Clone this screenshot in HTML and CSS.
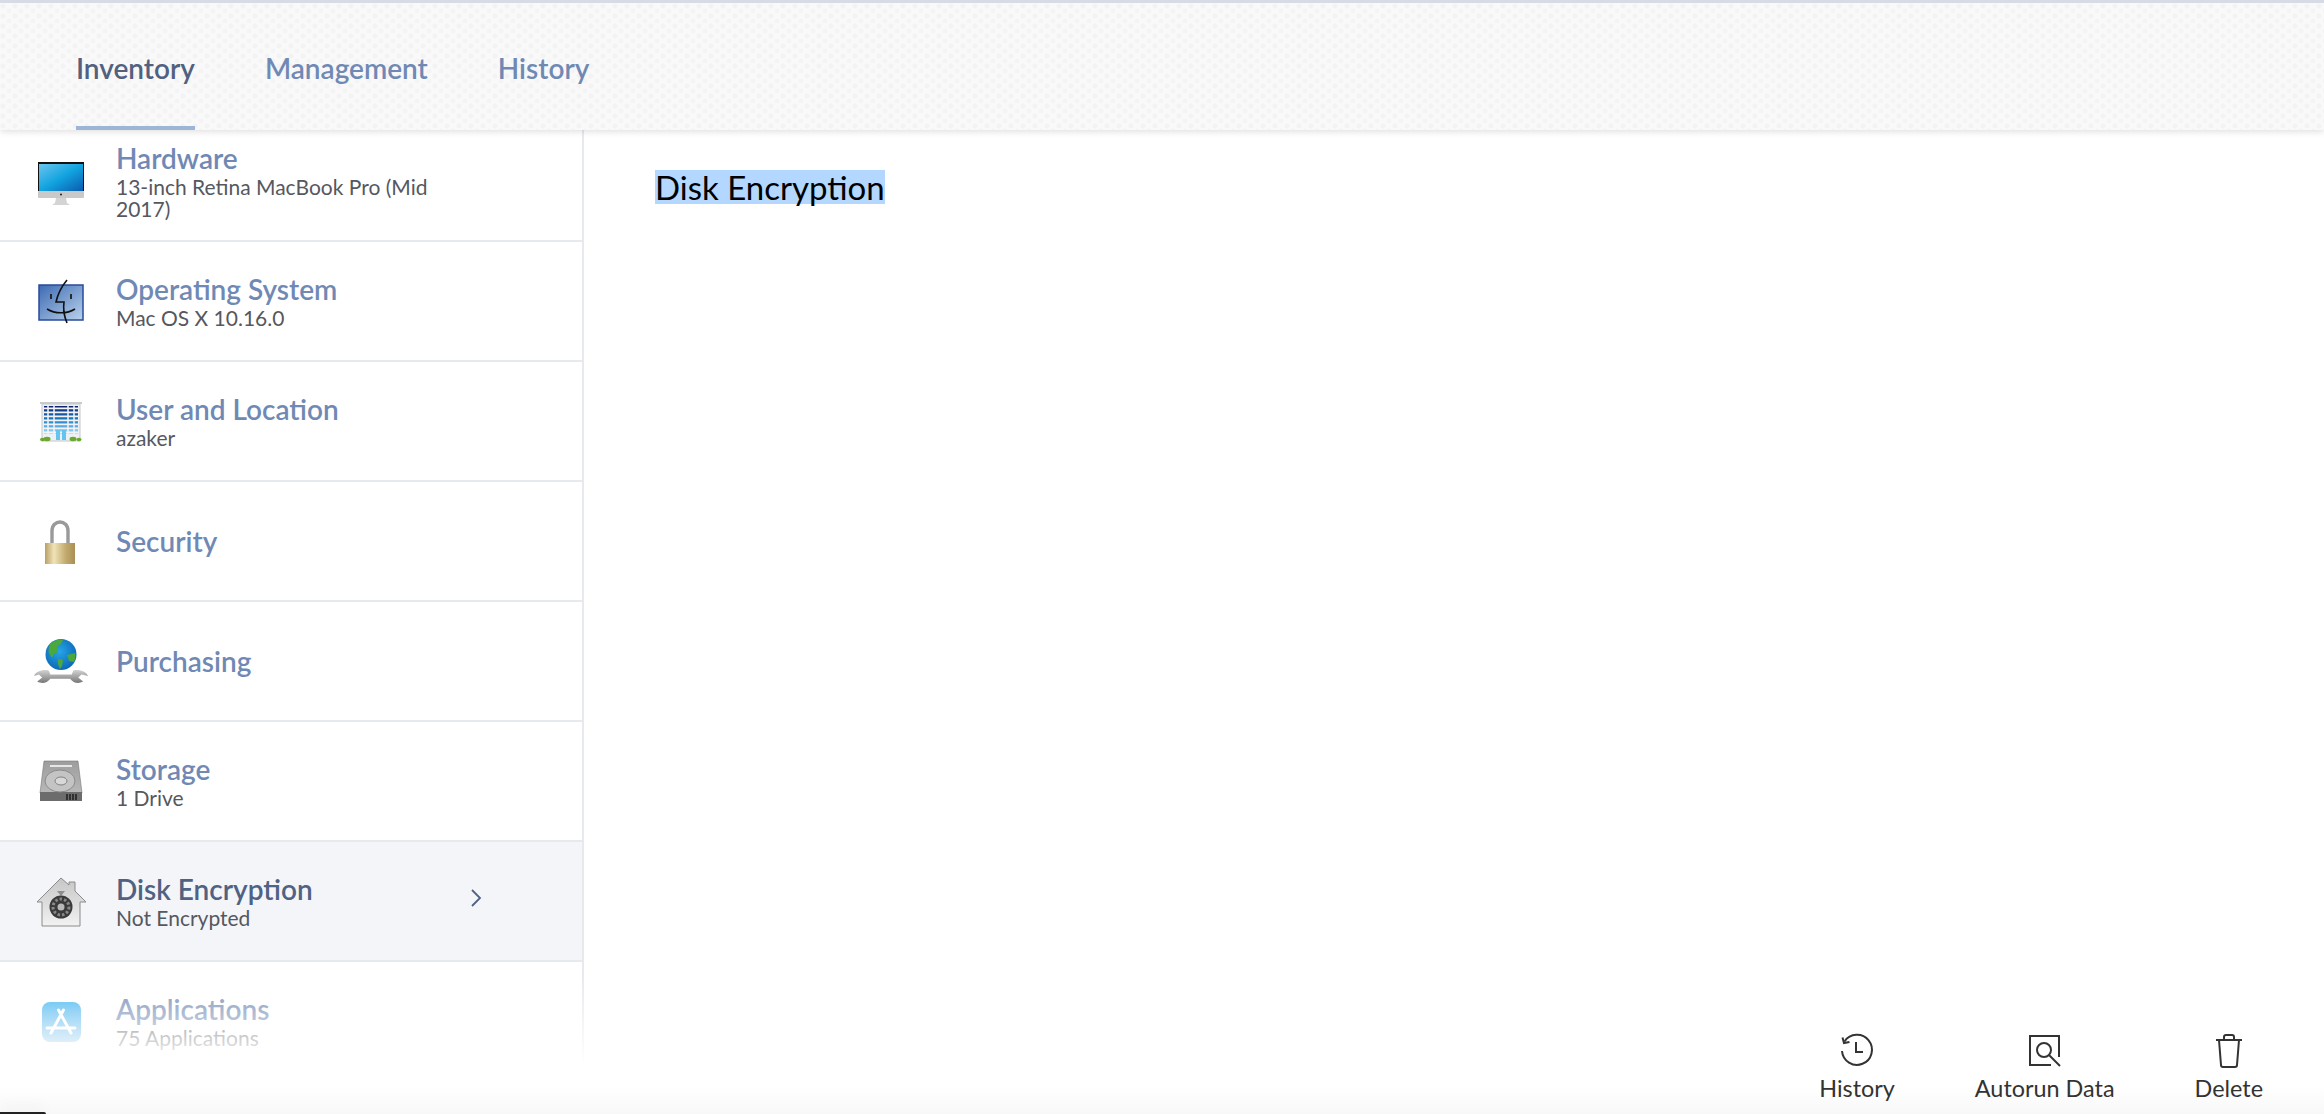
FILE: index.html
```html
<!DOCTYPE html>
<html lang="en">
<head>
    <meta charset="UTF-8">
    <title>Disk Encryption - Inventory</title>
    <link rel="stylesheet" href="styles.css">
</head>
<body>
    <div class="page">
        <header class="header">
            <nav class="tabs">
                <a class="tab tab-active">Inventory</a>
                <a class="tab">Management</a>
                <a class="tab">History</a>
            </nav>
        </header>

        <div class="content">
            <aside class="sidebar">
                <div class="row row-first">
                    <svg class="row-icon" viewBox="0 0 80 80">
                        <defs>
                            <linearGradient id="screen" x1="0" y1="0" x2="1" y2="1">
                                <stop offset="0" stop-color="#6cc4ee"/>
                                <stop offset=".5" stop-color="#12a4e0"/>
                                <stop offset="1" stop-color="#0b5bb0"/>
                            </linearGradient>
                        </defs>
                        <rect x="18" y="21" width="46" height="29" fill="#111"/>
                        <rect x="19" y="23" width="44" height="27" fill="url(#screen)"/>
                        <rect x="18" y="50" width="46" height="7" rx="1" fill="#c9c9c9"/>
                        <circle cx="41" cy="53.5" r="1" fill="#222"/>
                        <path d="M36 57h10l1 5 3 2H32l3-2z" fill="#d4d4d4"/>
                    </svg>
                    <div class="row-text">
                        <div class="row-title">Hardware</div>
                        <div class="row-sub">13-inch Retina MacBook Pro (Mid 2017)</div>
                    </div>
                </div>
                <div class="row">
                    <svg class="row-icon" viewBox="0 0 80 80">
                        <defs>
                            <linearGradient id="finder" x1="0" y1="0" x2="1" y2="1">
                                <stop offset="0" stop-color="#3c6ab2"/>
                                <stop offset="1" stop-color="#b9d2ec"/>
                            </linearGradient>
                        </defs>
                        <rect x="19" y="24" width="44" height="35" fill="url(#finder)" stroke="#2a4a9c" stroke-width="1.5"/>
                        <path d="M47 19c-5 6-9 13-11 22h8c-1 7 0 14 3 21M31 33v5M51 33v5M27 48c8 5 20 5 28 0" fill="none" stroke="#111" stroke-width="1.6"/>
                    </svg>
                    <div class="row-text">
                        <div class="row-title">Operating System</div>
                        <div class="row-sub">Mac OS X 10.16.0</div>
                    </div>
                </div>
                <div class="row">
                    <svg class="row-icon" viewBox="0 0 80 80">
                        <defs>
                            <linearGradient id="windows" x1="0" y1="0" x2="0" y2="1">
                                <stop offset="0" stop-color="#0f1f6b"/>
                                <stop offset=".5" stop-color="#1c7cc4"/>
                                <stop offset="1" stop-color="#a8e0f8"/>
                            </linearGradient>
                        </defs>
                        <rect x="22" y="23" width="38" height="37" fill="#eef1f4" stroke="#c4c7ca"/>
                        <rect x="20" y="21" width="42" height="2" fill="#c8cacc"/>
                        <rect x="24" y="25" width="34" height="28" fill="url(#windows)"/>
                        <path d="M24 27.4h34M24 31.4h34M24 35.4h34M24 39.4h34M24 43.4h34M24 47.4h34M24 51.4h34" stroke="#f2f5f7" stroke-width="1.7"/>
                        <path d="M28 25v28M34 25v28M48 25v28M54 25v28" stroke="#f2f5f7" stroke-width="1.5"/>
                        <rect x="36" y="49" width="4" height="10" fill="#64c4f0"/>
                        <rect x="42" y="49" width="4" height="10" fill="#64c4f0"/>
                        <ellipse cx="27" cy="58" rx="3.5" ry="2.2" fill="#6aa830"/>
                        <ellipse cx="22.5" cy="58.5" rx="2.5" ry="1.8" fill="#6aa830"/>
                        <ellipse cx="53" cy="58" rx="3.5" ry="2.2" fill="#6aa830"/>
                        <ellipse cx="59" cy="58.5" rx="2.5" ry="1.8" fill="#6aa830"/>
                    </svg>
                    <div class="row-text">
                        <div class="row-title">User and Location</div>
                        <div class="row-sub">azaker</div>
                    </div>
                </div>
                <div class="row">
                    <svg class="row-icon" viewBox="0 0 80 80">
                        <defs>
                            <linearGradient id="brass" x1="0" y1="0" x2="1" y2="0">
                                <stop offset="0" stop-color="#b9a066"/>
                                <stop offset=".3" stop-color="#f0e3b8"/>
                                <stop offset=".7" stop-color="#c2a96c"/>
                                <stop offset="1" stop-color="#a88f55"/>
                            </linearGradient>
                        </defs>
                        <path d="M32 42V30c0-12 16-12 16 0v12" fill="none" stroke="#9a9a9a" stroke-width="3.4"/>
                        <rect x="25" y="42" width="30" height="21" fill="url(#brass)"/>
                    </svg>
                    <div class="row-text">
                        <div class="row-title">Security</div>
                    </div>
                </div>
                <div class="row">
                    <svg class="row-icon" viewBox="0 0 80 80">
                        <defs>
                            <radialGradient id="globe" cx=".45" cy=".4" r=".7">
                                <stop offset="0" stop-color="#25a5e8"/>
                                <stop offset="1" stop-color="#0a5fb0"/>
                            </radialGradient>
                            <linearGradient id="steel" x1="0" y1="0" x2="0" y2="1">
                                <stop offset="0" stop-color="#d2d2d2"/>
                                <stop offset="1" stop-color="#777"/>
                            </linearGradient>
                        </defs>
                        <circle cx="41" cy="33.5" r="15.5" fill="url(#globe)"/>
                        <path d="M30 23c4-4 9-5 13-4l-2 4-4 3 1 5-4 2-2 4-3-5c-1-3 0-6 1-9zM47 34l8-2c1 3 0 6-1 9l-5-1zM38 38l5 1-1 6-2 3-2-5z" fill="#4aa83c"/>
                        <path d="M24 55c1-3 5-5 9-4l1 3h13l1-3c4-1 8 1 9 4l-4-1-2 2 3 3c-3 2-6 1-8-2H34c-2 3-5 4-8 2l3-3-2-2z" fill="url(#steel)" transform="translate(-25.4 -22) scale(1.64 1.4)"/>
                    </svg>
                    <div class="row-text">
                        <div class="row-title">Purchasing</div>
                    </div>
                </div>
                <div class="row">
                    <svg class="row-icon" viewBox="0 0 80 80">
                        <defs>
                            <linearGradient id="drive" x1="0" y1="0" x2="0" y2="1">
                                <stop offset="0" stop-color="#9d9d9d"/>
                                <stop offset="1" stop-color="#b8b8b8"/>
                            </linearGradient>
                        </defs>
                        <path d="M24 20h34l4 32H20z" fill="url(#drive)" stroke="#777" stroke-width=".6"/>
                        <rect x="20" y="51" width="42" height="9" fill="#6c6c6c"/>
                        <path d="M47 53v6M50 53v6M53 53v6M56 53v6" stroke="#222" stroke-width="1.6"/>
                        <rect x="30" y="24" width="22" height="2" fill="#e6e6e6"/>
                        <ellipse cx="40" cy="40" rx="15" ry="11" fill="#c4c4c4" stroke="#8a8a8a"/>
                        <ellipse cx="41" cy="40" rx="6" ry="4" fill="#d8d8d8" stroke="#808080"/>
                    </svg>
                    <div class="row-text">
                        <div class="row-title">Storage</div>
                        <div class="row-sub">1 Drive</div>
                    </div>
                </div>
                <div class="row row-active">
                    <svg class="row-icon" viewBox="0 0 80 80">
                        <defs>
                            <linearGradient id="house" x1="0" y1="0" x2="0" y2="1">
                                <stop offset="0" stop-color="#c6c6c6"/>
                                <stop offset="1" stop-color="#f2f2f2"/>
                            </linearGradient>
                        </defs>
                        <path d="M41 17l8 7v-3h6v9l11 11h-6v24H22V41h-5z" fill="url(#house)" stroke="#8b8b8b"/>
                        <path d="M37 30h8l-4 5z" fill="#8e8e8e"/>
                        <circle cx="41" cy="46" r="11.5" fill="#3a3a3a"/>
                        <circle cx="41" cy="46" r="8" fill="none" stroke="#888" stroke-width="3" stroke-dasharray="2.5 2"/>
                        <circle cx="41" cy="46" r="3.5" fill="#b8b8b8"/>
                    </svg>
                    <div class="row-text">
                        <div class="row-title">Disk Encryption</div>
                        <div class="row-sub">Not Encrypted</div>
                    </div>
                    <svg class="chevron" viewBox="0 0 12 20">
                        <path d="M2 2l8 8-8 8" fill="none" stroke="#4f6284" stroke-width="1.8"/>
                    </svg>
                </div>
                <div class="row">
                    <svg class="row-icon" viewBox="0 0 80 80">
                        <defs>
                            <linearGradient id="store" x1="0" y1="0" x2="0" y2="1">
                                <stop offset="0" stop-color="#3fb4f0"/>
                                <stop offset="1" stop-color="#7cc0ec"/>
                            </linearGradient>
                        </defs>
                        <rect x="22" y="21" width="39" height="40" rx="8" fill="url(#store)"/>
                        <path d="M38.5 29L51 52M43.5 29L31 52M27 47h28" fill="none" stroke="#fff" stroke-width="3" stroke-linecap="round"/>
                    </svg>
                    <div class="row-text">
                        <div class="row-title">Applications</div>
                        <div class="row-sub">75 Applications</div>
                    </div>
                </div>
            </aside>

            <main class="main">
                <div class="main-title"><span class="selected">Disk Encryption</span></div>
                <div class="actions">
                    <div class="action">
                        <svg class="action-icon" viewBox="0 0 36 36">
                            <path d="M5.5 8.5A15 15 0 1 1 3 18" fill="none" stroke="#333" stroke-width="2"/>
                            <path d="M3.5 4.5l1.5 5.5 5.5-1" fill="none" stroke="#333" stroke-width="2"/>
                            <path d="M17 9v10h7" fill="none" stroke="#333" stroke-width="2"/>
                        </svg>
                        <span>History</span>
                    </div>
                    <div class="action">
                        <svg class="action-icon" viewBox="0 0 36 36">
                            <path d="M32 24V3H3v29h21" fill="none" stroke="#333" stroke-width="2"/>
                            <circle cx="17" cy="17" r="7" fill="none" stroke="#333" stroke-width="2"/>
                            <path d="M22 22l11 11" fill="none" stroke="#333" stroke-width="2"/>
                        </svg>
                        <span>Autorun Data</span>
                    </div>
                    <div class="action">
                        <svg class="action-icon" viewBox="0 0 36 36">
                            <path d="M5 7h26M13 7V4c0-1 1-2 2-2h6c1 0 2 1 2 2v3M8 7l2 25c0 1 1 2 2 2h12c1 0 2-1 2-2l2-25" fill="none" stroke="#333" stroke-width="2"/>
                        </svg>
                        <span>Delete</span>
                    </div>
                </div>
            </main>
        </div>

        <div class="fade"></div>
        <div class="corner"></div>
    </div>
</body>
</html>
```

FILE: styles.css
```css
html, body {
    margin: 0;
    padding: 0;
}
body {
    font-family: Lato, "Open Sans", sans-serif;
    background: white;
}
.page {
    position: relative;
    display: flex;
    flex-direction: column;
    height: 1114px;
    overflow: hidden;
    background: white;
}

/* top bar */
.header {
    position: relative;
    z-index: 2;
    flex: none;
    height: 127px;
    border-top: 3px solid #d6dbe6;
    background-color: #f9f9f9;
    background-image:
        radial-gradient(circle at 3px 3px, #f3f3f3 2px, transparent 3px),
        radial-gradient(circle at 9px 8px, #f4f4f4 2px, transparent 3px);
    background-size: 12px 10px;
    box-shadow: 0 2px 6px rgba(0,0,0,0.12);
}
.tabs {
    display: flex;
    gap: 70px;
    height: 100%;
    padding-left: 76px;
}
.tab {
    display: flex;
    align-items: center;
    box-sizing: border-box;
    height: 100%;
    padding-top: 6px;
    border-bottom: 4px solid transparent;
    font-size: 28px;
    font-weight: 600;
    color: #7089b4;
}
.tab-active {
    color: #51617f;
    border-bottom-color: #9cb6d6;
}

.content {
    display: flex;
    flex: 1;
    min-height: 0;
}

/* left list */
.sidebar {
    flex: none;
    box-sizing: border-box;
    width: 584px;
    margin-top: -8px;
    border-right: 2px solid #e6e9ee;
}
.row {
    display: flex;
    align-items: center;
    box-sizing: border-box;
    height: 120px;
    padding-left: 20px;
    border-bottom: 2px solid #e6e9ee;
}
.row-active {
    background: #f3f5f9;
}
.row-active .row-title {
    color: #4f6284;
}
.row-icon {
    flex: none;
    width: 80px;
    height: 80px;
    margin-right: 16px;
}
.row-text {
    width: 340px;
}
.row-title {
    font-size: 28px;
    font-weight: 600;
    line-height: 30px;
    color: #7089b4;
}
.row-sub {
    margin-top: 3px;
    font-size: 21px;
    line-height: 22px;
    color: #55585f;
}
.chevron {
    width: 12px;
    height: 20px;
    margin-left: 14px;
    margin-top: -6px;
}

/* right panel */
.main {
    position: relative;
    z-index: 1;
    display: flex;
    flex: 1;
    flex-direction: column;
    padding: 40px 61px 11px 71px;
}
.main-title {
    font-size: 33px;
    line-height: 34px;
    color: #000;
}
.selected {
    display: inline-block;
    background: #b3d7fe;
}
.actions {
    display: flex;
    justify-content: flex-end;
    gap: 80px;
    margin-top: auto;
}
.action {
    display: flex;
    flex-direction: column;
    align-items: center;
    font-size: 23.4px;
    line-height: 30px;
    color: #333;
}
.action-icon {
    width: 36px;
    height: 36px;
    margin-bottom: 4px;
}

/* overlays at the bottom of the page */
.fade {
    position: absolute;
    left: 0;
    right: 0;
    bottom: 0;
    height: 140px;
    background: linear-gradient(to bottom, rgba(255,255,255,0) 0%, #fff 65%, #fff 80%, #f8f8f8 100%);
}
.corner {
    position: absolute;
    left: 0;
    bottom: 0;
    width: 46px;
    height: 2px;
    background: #222;
    border-top-right-radius: 2px;
    box-shadow: 0 -4px 14px rgba(0,0,0,0.12);
}
```
